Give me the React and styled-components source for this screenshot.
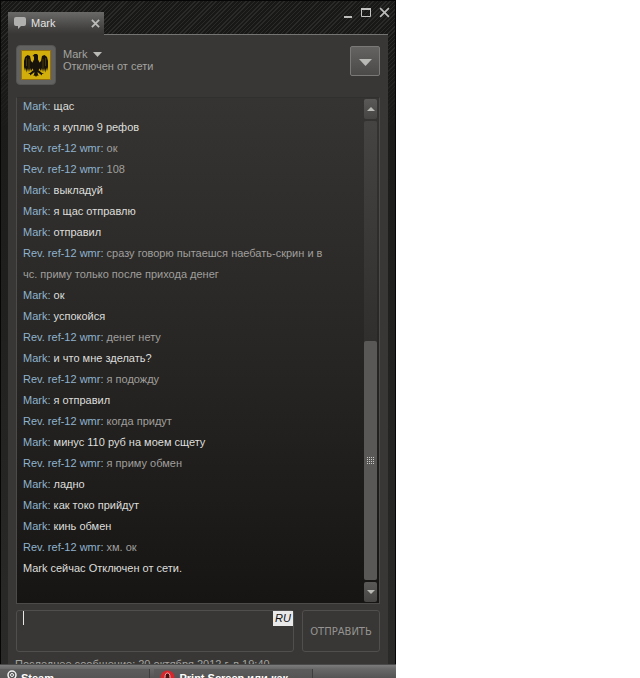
import React from 'react'
import styled, { createGlobalStyle, css } from 'styled-components'

const GlobalStyle = createGlobalStyle`
  * {
    box-sizing: border-box;
  }
  body {
    margin: 0;
    background: #ffffff;
    font-family: "Liberation Sans", Arial, sans-serif;
    font-size: 11px;
  }
  button, textarea {
    font-family: inherit;
    font-size: inherit;
    margin: 0;
  }
`

const Desktop = styled.div`
  height: 100vh;
  display: grid;
  grid-template-columns: 99fr 61fr;
  overflow: hidden;
`

const Screen = styled.div`
  display: grid;
  grid-template-rows: minmax(0, 1fr) 14px;
  min-width: 0;
  height: 100vh;
`

const ChatWindow = styled.main`
  display: flex;
  flex-direction: column;
  min-height: 0;
  overflow: hidden;
  padding: 0 7px;
  border: 1px solid #060606;
  border-bottom: 0;
  background:
    linear-gradient(to bottom, transparent 40px, #1b1b1a 130px, #2a2a29),
    repeating-linear-gradient(135deg, #181817 0 2px, #2a2a28 2px 3px);
`

const TitleBar = styled.header`
  display: flex;
  justify-content: space-between;
  align-items: flex-end;
  height: 33px;
  flex: none;
`

const Tab = styled.div`
  display: flex;
  align-items: center;
  gap: 5px;
  width: 96px;
  height: 22px;
  padding: 0 4px 0 6px;
  color: #e4e4e2;
  background: linear-gradient(to bottom, #6a6a69, #454443 70%, #383735);
`

const TabName = styled.span`
  flex: 1;
`

const IconButton = styled.button`
  display: flex;
  padding: 0;
  border: 0;
  background: none;
  cursor: pointer;
`

const WindowButtons = styled.div`
  display: flex;
  align-self: flex-start;
  gap: 8px;
  padding: 6px 0 0;
  margin-right: -2px;
`

const Panel = styled.section`
  display: flex;
  flex-direction: column;
  flex: 1;
  min-height: 0;
  padding: 0 8px;
  background: #383735;
  border-top: 1px solid #747472;
  border-image: linear-gradient(to right, #383735 96px, #747472 96px) 1;
`

const Profile = styled.div`
  display: flex;
  align-items: flex-start;
  padding: 10px 0 12px;
  gap: 7px;
`

const Avatar = styled.div`
  display: flex;
  padding: 4px;
  border-radius: 4px;
  background: #626260;
  border: 1px solid #555553;
`

const ProfileText = styled.div`
  flex: 1;
  padding-top: 3px;
  line-height: 12px;
  color: #a3a3a0;
`

const NameButton = styled.button`
  display: flex;
  align-items: center;
  gap: 6px;
  padding: 0;
  border: 0;
  background: none;
  color: inherit;
  line-height: 12px;
  cursor: pointer;
`

const MenuButton = styled.button`
  display: flex;
  align-items: center;
  justify-content: center;
  width: 30px;
  height: 30px;
  margin-top: 1px;
  padding: 2px 0 0;
  border: 1px solid #7a7977;
  border-radius: 2px;
  background: linear-gradient(to bottom, #646361, #4b4a48);
  cursor: pointer;
`

const Log = styled.div`
  display: flex;
  flex: 1;
  min-height: 0;
  border: 1px solid #4c4b49;
  border-top-color: #30302e;
  background: linear-gradient(to bottom, #353432, #272624 50%, #161513);
`

const Messages = styled.ul`
  display: flex;
  flex-direction: column;
  justify-content: flex-end;
  flex: 1;
  margin: 0;
  padding: 0 32px 24px 6px;
  overflow: hidden;
  list-style: none;
`

const Message = styled.li`
  flex: none;
  line-height: 21px;
  color: ${props => (props.$own ? '#a09f9c' : '#dededb')};
`

const Author = styled.span`
  color: #8fb3ce;
`

const ScrollBar = styled.div`
  display: flex;
  flex-direction: column;
  gap: 2px;
  width: 15px;
  padding: 1px 2px 1px 0;
`

const ScrollButton = styled.button`
  display: flex;
  align-items: center;
  justify-content: center;
  height: 20px;
  padding: 0;
  border: 0;
  border-radius: 2px;
  background: linear-gradient(to bottom, #5a5957, #464543);
  cursor: pointer;
`

const Track = styled.div`
  display: flex;
  flex-direction: column;
  justify-content: flex-end;
  flex: 1;
  border-radius: 2px;
  background: linear-gradient(to bottom, #454442, #2f2e2c 50%);
`

const Thumb = styled.div`
  display: flex;
  align-items: center;
  justify-content: center;
  height: 52%;
  border-radius: 2px;
  background: #595856;
`

const Composer = styled.form`
  display: flex;
  gap: 8px;
  height: 42px;
  margin-top: 6px;
  flex: none;
`

const outlined = css`
  border: 1px solid #504f4d;
  border-radius: 3px;
  background: #383735;
`

const InputFrame = styled.div`
  ${outlined}
  display: flex;
  align-items: flex-start;
  flex: 1;
  min-width: 0;
`

const Input = styled.textarea`
  flex: 1;
  min-width: 0;
  height: 100%;
  padding: 0 6px;
  border: 0;
  outline: 0;
  resize: none;
  background: none;
  color: #e4e4e2;
  caret-color: transparent;
`

const Caret = styled.span`
  width: 1px;
  height: 14px;
  margin-left: 6px;
  background: #e8e8e6;
`

const Language = styled.span`
  width: 20px;
  line-height: 15px;
  text-align: center;
  font-style: italic;
  color: #111111;
  background: #e9e9e9;
`

const SendButton = styled.button`
  ${outlined}
  width: 78px;
  padding: 0;
  color: #959492;
  font-family: "DejaVu Sans", sans-serif;
  font-size: 10px;
  cursor: pointer;
`

const Status = styled.p`
  flex: none;
  height: 12px;
  margin: 0 0 0 -1px;
  padding-top: 6px;
  line-height: 12px;
  color: #a3a3a0;
  white-space: nowrap;
`

const TaskBar = styled.nav`
  display: flex;
  gap: 4px;
  padding-top: 4px;
  overflow: hidden;
  border-top: 1px solid #4a4a4a;
  background: linear-gradient(to bottom, #7c7c7c, #686868 4px, #545454);
`

const Task = styled.button`
  display: flex;
  align-items: flex-start;
  gap: 4px;
  width: ${props => props.$width};
  height: 24px;
  padding: 1px 6px;
  border: 0;
  border-right: 1px solid #3e3e3e;
  background: linear-gradient(to bottom, #5c5c5c, #484848);
  color: #ffffff;
  font-weight: bold;
  line-height: 16px;
  text-align: left;
  white-space: nowrap;
`

const messages = [
  { from: 'Mark', text: 'щас' },
  { from: 'Mark', text: 'я куплю 9 рефов' },
  { from: 'Rev. ref-12 wmr', text: 'ок', own: true },
  { from: 'Rev. ref-12 wmr', text: '108', own: true },
  { from: 'Mark', text: 'выкладуй' },
  { from: 'Mark', text: 'я щас отправлю' },
  { from: 'Mark', text: 'отправил' },
  { from: 'Rev. ref-12 wmr', text: 'сразу говорю пытаешся наебать-скрин и в чс. приму только после прихода денег', own: true },
  { from: 'Mark', text: 'ок' },
  { from: 'Mark', text: 'успокойся' },
  { from: 'Rev. ref-12 wmr', text: 'денег нету', own: true },
  { from: 'Mark', text: 'и что мне зделать?' },
  { from: 'Rev. ref-12 wmr', text: 'я подожду', own: true },
  { from: 'Mark', text: 'я отправил' },
  { from: 'Rev. ref-12 wmr', text: 'когда придут', own: true },
  { from: 'Mark', text: 'минус 110 руб на моем сщету' },
  { from: 'Rev. ref-12 wmr', text: 'я приму обмен', own: true },
  { from: 'Mark', text: 'ладно' },
  { from: 'Mark', text: 'как токо прийдут' },
  { from: 'Mark', text: 'кинь обмен' },
  { from: 'Rev. ref-12 wmr', text: 'хм. ок', own: true },
  { text: 'Mark сейчас Отключен от сети.' },
]

function Arrow({ width, height, up }) {
  return (
    <svg width={width} height={height} viewBox="0 0 10 6" preserveAspectRatio="none" aria-hidden="true">
      <path d={up ? 'M0 6 5 0l5 6z' : 'M0 0h10L5 6z'} fill="#b9b9b6" />
    </svg>
  )
}

function Bubble() {
  return (
    <svg width="12" height="12" viewBox="0 0 12 12" aria-hidden="true">
      <path d="M2 0h8q2 0 2 2v5q0 2-2 2H7l-3 3V9H2Q0 9 0 7V2q0-2 2-2z" fill="#b0b0ae" />
    </svg>
  )
}

function Cross({ size, width }) {
  return (
    <svg width={size} height={size} viewBox="0 0 10 10" aria-hidden="true">
      <path d="M1 1l8 8M9 1L1 9" stroke="#bcbcba" strokeWidth={width} />
    </svg>
  )
}

function Eagle() {
  return (
    <svg width="30" height="30" viewBox="0 0 30 30" aria-hidden="true">
      <rect width="30" height="30" fill="#96700c" />
      <rect x="1" y="1" width="28" height="28" fill="#d2ae0c" />
      <g fill="#17120a">
        <path d="M11.500 6l2-2H16l1 1.500v4l1.500 3v6l-2 4-1.500 1-1.500-1-2-4v-6l1.500-3V6.500z" />
        <path d="M12 13l-2-2-1-5-2.500-1L4 7l-1 4v6l1 4 .8-3 1 4.500L7 18l1 4 1-4 1 3 2-3z" />
        <path d="M18 13l2-2 1-5 2.500-1L26 7l1 4v6l-1 4-.8-3-1 4.500L23 18l-1 4-1-4-1 3-2-3z" />
        <path d="M12.500 20L9 23l-2 .5 2 .5v1.500l2-1.500 2.500-2zM17.500 20l3.500 3 2 .5-2 .5v1.500l-2-1.500-2.500-2z" />
        <path d="M14 21h2l1.500 5-1.500-.5-1 1.500-1-1.500-1.500.5z" />
      </g>
      <path d="M5.500 8v8M8 9v9M22 9v9M24.500 8v8" stroke="#75600f" strokeWidth=".5" />
    </svg>
  )
}

function Grip() {
  const dots = []
  for (let y = 0; y < 4; y++) {
    for (let x = 0; x < 4; x++) {
      dots.push(<rect key={`${x}${y}`} x={x * 2} y={y * 2} width="1" height="1" />)
    }
  }
  return <svg width="7" height="7" fill="#c9c9c7" aria-hidden="true">{dots}</svg>
}

export default function App() {
  return (
    <Desktop>
      <GlobalStyle />
      <Screen>
        <ChatWindow>
          <TitleBar>
            <Tab>
              <Bubble />
              <TabName>Mark</TabName>
              <IconButton aria-label="Закрыть вкладку"><Cross size={9} width={2} /></IconButton>
            </Tab>
            <WindowButtons>
              <IconButton aria-label="Свернуть">
                <svg width="10" height="12"><path d="M1 10h8" stroke="#bcbcba" strokeWidth="2" /></svg>
              </IconButton>
              <IconButton aria-label="Развернуть">
                <svg width="10" height="12" fill="none" stroke="#c4c4c2">
                  <path d="M.5 2v7.500h9V2" /><path d="M0 2h10" strokeWidth="2" />
                </svg>
              </IconButton>
              <IconButton aria-label="Закрыть"><Cross size={11} width={1.5} /></IconButton>
            </WindowButtons>
          </TitleBar>
          <Panel>
            <Profile>
              <Avatar><Eagle /></Avatar>
              <ProfileText>
                <NameButton>Mark <Arrow width={9} height={5} /></NameButton>
                Отключен от сети
              </ProfileText>
              <MenuButton aria-label="Меню"><Arrow width={13} height={7} /></MenuButton>
            </Profile>
            <Log>
              <Messages>
                {messages.map((item, i) => (
                  <Message key={i} $own={item.own}>
                    {item.from && <Author>{item.from}: </Author>}
                    {item.text}
                  </Message>
                ))}
              </Messages>
              <ScrollBar>
                <ScrollButton aria-label="Вверх"><Arrow width={8} height={4} up /></ScrollButton>
                <Track><Thumb><Grip /></Thumb></Track>
                <ScrollButton aria-label="Вниз"><Arrow width={8} height={4} /></ScrollButton>
              </ScrollBar>
            </Log>
            <Composer onSubmit={e => e.preventDefault()}>
              <InputFrame>
                <Caret />
                <Input aria-label="Сообщение" />
                <Language>RU</Language>
              </InputFrame>
              <SendButton type="submit">ОТПРАВИТЬ</SendButton>
            </Composer>
            <Status>Последнее сообщение: 20 октября 2012 г. в 19:40</Status>
          </Panel>
        </ChatWindow>
        <TaskBar>
          <Task $width="38%">
            <svg width="11" height="14" viewBox="0 0 11 14" fill="none" stroke="#f2f2f2" aria-hidden="true">
              <circle cx="6" cy="5" r="4" strokeWidth="1.500" /><circle cx="6" cy="5" r="1.500" />
              <path d="M3 8L0 11" strokeWidth="2" />
            </svg>
            Steam
          </Task>
          <Task $width="40%">
            <svg width="15" height="15" viewBox="0 0 15 15" aria-hidden="true">
              <circle cx="7.500" cy="7.500" r="7" fill="#d8262c" />
              <ellipse cx="7.500" cy="7.500" rx="2.500" ry="4.500" fill="#4a1012" stroke="#f3b5b5" />
            </svg>
            Print Screen или как
          </Task>
        </TaskBar>
      </Screen>
    </Desktop>
  )
}
